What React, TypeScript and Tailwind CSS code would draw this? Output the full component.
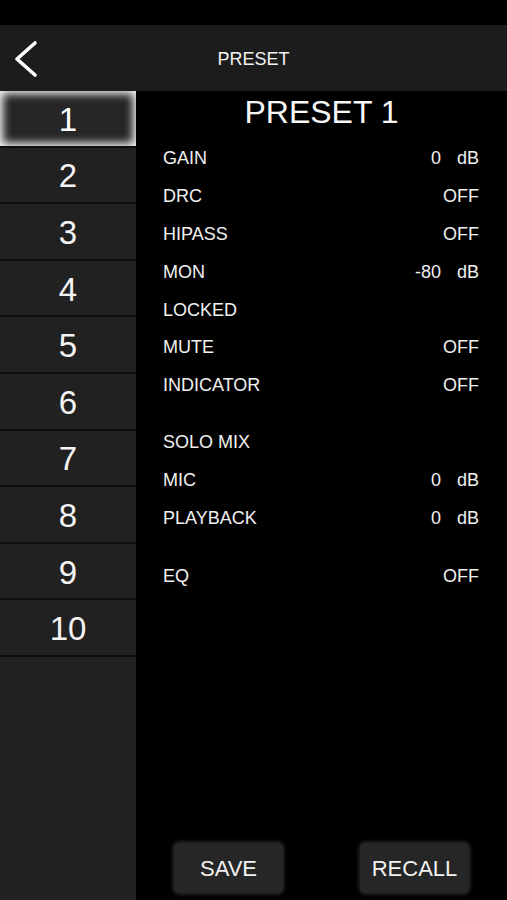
import React from "react";

const rows: { label?: string; num?: string; unit?: string; value?: string; spacer?: number }[] = [
  { label: "GAIN", num: "0", unit: "dB" },
  { label: "DRC", value: "OFF" },
  { label: "HIPASS", value: "OFF" },
  { label: "MON", num: "-80", unit: "dB" },
  { label: "LOCKED" },
  { label: "MUTE", value: "OFF" },
  { label: "INDICATOR", value: "OFF" },
  { spacer: 19 },
  { label: "SOLO MIX" },
  { label: "MIC", num: "0", unit: "dB" },
  { label: "PLAYBACK", num: "0", unit: "dB" },
  { spacer: 21 },
  { label: "EQ", value: "OFF" },
];

export default function App() {
  const nums = ["1", "2", "3", "4", "5", "6", "7", "8", "9", "10"];
  return (
    <div
      className="w-[507px] h-[900px] bg-black text-white flex flex-col overflow-hidden"
      style={{ fontFamily: '"Liberation Sans", Arial, sans-serif' }}
    >
      <div className="h-[25px] bg-black shrink-0" />
      <div className="h-[66px] bg-[#1c1c1c] shrink-0 relative flex items-center justify-center">
        <svg className="absolute left-[13px] top-[15px]" width="26" height="38" viewBox="0 0 26 38">
          <path d="M22 3 L4 19 L22 35" fill="none" stroke="white" strokeWidth="3.6" strokeLinecap="round" strokeLinejoin="round" />
        </svg>
        <span className="text-[18px] text-[#f2f2f2] mt-[3px]">PRESET</span>
      </div>
      <div className="flex flex-1">
        <div className="w-[136px] bg-[#212121] flex flex-col">
          {nums.map((n, i) => (
            <div
              key={n}
              className={
                i === 0
                  ? "h-[56.6px] border-b-2 border-[#0e0e0e] flex items-center justify-center bg-[#262626] shadow-[inset_0_0_9px_3px_rgba(255,255,255,0.95)] text-[33px] leading-none pt-[2px]"
                  : "h-[56.6px] border-b-2 border-[#0e0e0e] flex items-center justify-center text-[33px] leading-none text-[#f4f4f4] pt-[2px]"
              }
            >
              {n}
            </div>
          ))}
        </div>
        <div className="flex-1 flex flex-col">
          <div className="text-center text-[32px] leading-none pt-[5px] h-[49px] text-[#f7f7f7]">PRESET 1</div>
          <div className="flex flex-col pl-[27px] pr-[28px]">
            {rows.map((r, i) =>
              r.spacer ? (
                <div key={i} style={{ height: r.spacer }} />
              ) : (
                <div key={i} className="h-[37.8px] flex items-center justify-between text-[18px] text-[#f0f0f0]">
                  <span>{r.label}</span>
                  {r.value ? (
                    <span>{r.value}</span>
                  ) : r.num ? (
                    <span className="flex">
                      <span className="text-right">{r.num}</span>
                      <span className="w-[38px] text-right">{r.unit}</span>
                    </span>
                  ) : null}
                </div>
              )
            )}
          </div>
          <div className="flex-1" />
          <div className="flex justify-between pl-[38px] pr-[38px] pb-[7px]">
            <div className="w-[109px] h-[50px] rounded-[5px] bg-[#262626] shadow-[0_0_4px_1px_rgba(255,255,255,0.18)] flex items-center justify-center text-[22px] text-[#f2f2f2]">
              SAVE
            </div>
            <div className="w-[109px] h-[50px] rounded-[5px] bg-[#262626] shadow-[0_0_4px_1px_rgba(255,255,255,0.18)] flex items-center justify-center text-[22px] text-[#f2f2f2]">
              RECALL
            </div>
          </div>
        </div>
      </div>
    </div>
  );
}
